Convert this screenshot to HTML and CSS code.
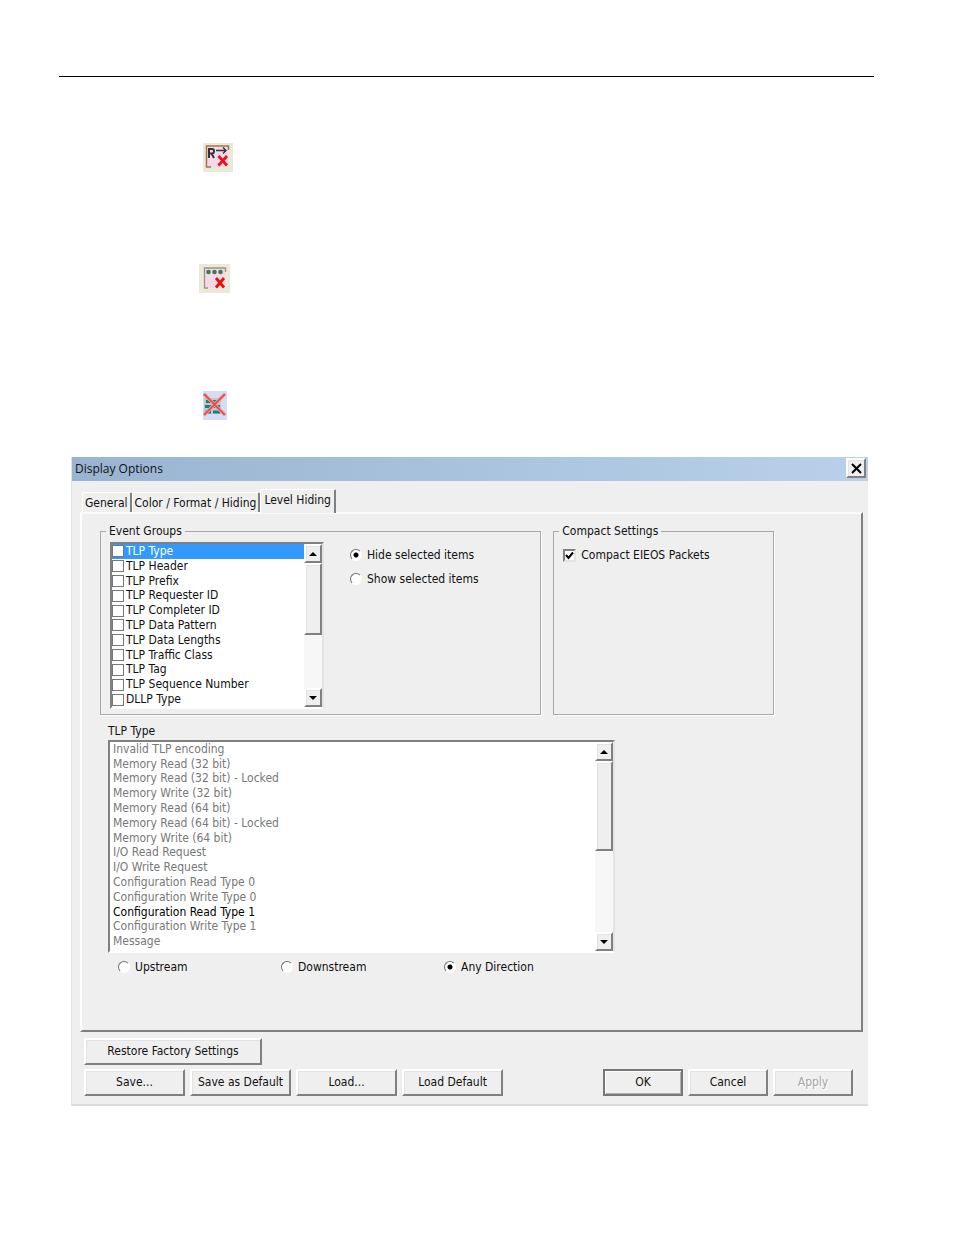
FILE: index.html
```
<!DOCTYPE html>
<html lang="en">
<head>
    <meta charset="UTF-8">
    <meta name="viewport" content="width=device-width, initial-scale=1.0">
    <title>Display Options</title>
    <link rel="stylesheet" href="styles.css">
</head>
<body>

    <hr class="page-rule">

    <!-- Toolbar icons -->
    <div class="icons">
        <svg class="icon" width="30" height="29" viewBox="0 0 30 29">
            <rect width="30" height="29" fill="#ece9d8"/>
            <rect x="3" y="4" width="22" height="20" fill="#f5d9ea"/>
            <path d="M8 24H3.500V3H25.500V7" fill="none" stroke="#a9714b" stroke-width="1.500"/>
            <path d="M6 15V6H9Q11 6 11 8Q11 10.500 9 10.500H6M8.500 10.500L11 15" fill="none" stroke="#333" stroke-width="2"/>
            <path d="M13 7.500H23M20 4.500L23 7.500L20 10.500" fill="none" stroke="#333" stroke-width="1.400"/>
            <path d="M15.500 13L24 22.500M24 13L15.500 22.500" stroke="#e8141c" stroke-width="2.800"/>
        </svg>
        <svg class="icon icon-dots" width="31" height="29" viewBox="0 0 31 29">
            <rect width="31" height="29" fill="#ece9d8"/>
            <rect x="6" y="5" width="20" height="19" fill="#f3d9e6"/>
            <path d="M9 24H5.500V4H26.500V8" fill="none" stroke="#98938b" stroke-width="1.300"/>
            <g fill="#3c7a58">
                <circle cx="9.500" cy="8" r="2.300"/>
                <circle cx="15.500" cy="8" r="2.300"/>
                <circle cx="21.500" cy="8" r="2.300"/>
            </g>
            <path d="M17 14L25 23.500M25 14L17 23.500" stroke="#e8100c" stroke-width="2.800"/>
        </svg>
        <svg class="icon icon-rows" width="24" height="29" viewBox="0 0 24 29">
            <rect width="24" height="29" fill="#d5dcf3"/>
            <rect x="1" y="7" width="17" height="16" fill="#c4c8c6"/>
            <path d="M3 10.500H16M2 15.500H8M10 15.500H17M2 21H8M10 21H17" stroke="#0d8585" stroke-width="3"/>
            <path d="M1 3L22 24M22 3L1 24" stroke="#f59a9a" stroke-width="3.500"/>
            <path d="M1 3L22 24M22 3L1 24" stroke="#e04444" stroke-width="1.600"/>
        </svg>
    </div>

    <div class="dialog">
        <div class="title-bar">
            <span class="title">Display Options</span>
            <button class="close-btn" aria-label="Close">
                <svg width="11" height="11" viewBox="0 0 11 11"><path d="M1 1L10 10M10 1L1 10" stroke="#000" stroke-width="2"/></svg>
            </button>
        </div>

        <div class="tabs" role="tablist">
            <button class="tab" role="tab">General</button>
            <button class="tab" role="tab">Color / Format / Hiding</button>
            <button class="tab active" role="tab" aria-selected="true">Level Hiding</button>
        </div>

        <div class="tab-panel" role="tabpanel">
            <div class="groups">
                <fieldset class="group events">
                    <legend>Event Groups</legend>
                    <div class="list-box">
                        <div class="check-list">
                            <label class="selected"><input type="checkbox">TLP Type</label>
                            <label><input type="checkbox">TLP Header</label>
                            <label><input type="checkbox">TLP Prefix</label>
                            <label><input type="checkbox">TLP Requester ID</label>
                            <label><input type="checkbox">TLP Completer ID</label>
                            <label><input type="checkbox">TLP Data Pattern</label>
                            <label><input type="checkbox">TLP Data Lengths</label>
                            <label><input type="checkbox">TLP Traffic Class</label>
                            <label><input type="checkbox">TLP Tag</label>
                            <label><input type="checkbox">TLP Sequence Number</label>
                            <label><input type="checkbox">DLLP Type</label>
                        </div>
                        <div class="scrollbar">
                            <button class="arrow" aria-label="Scroll up"><svg width="8" height="4" viewBox="0 0 8 4"><path d="M0 4L4 0L8 4Z"/></svg></button>
                            <div class="track"><div class="thumb thumb-events"></div></div>
                            <button class="arrow" aria-label="Scroll down"><svg width="8" height="4" viewBox="0 0 8 4"><path d="M0 0L4 4L8 0Z"/></svg></button>
                        </div>
                    </div>
                    <div class="radios">
                        <label><input type="radio" name="mode" checked>Hide selected items</label>
                        <label><input type="radio" name="mode">Show selected items</label>
                    </div>
                </fieldset>

                <fieldset class="group compact">
                    <legend>Compact Settings</legend>
                    <label class="compact-check"><input type="checkbox" checked>Compact EIEOS Packets</label>
                </fieldset>
            </div>

            <div class="type-section">
                <div class="type-label" id="type-label">TLP Type</div>
                <div class="list-box">
                    <ul class="type-list" role="listbox" aria-labelledby="type-label">
                        <li role="option">Invalid TLP encoding</li>
                        <li role="option">Memory Read (32 bit)</li>
                        <li role="option">Memory Read (32 bit) - Locked</li>
                        <li role="option">Memory Write (32 bit)</li>
                        <li role="option">Memory Read (64 bit)</li>
                        <li role="option">Memory Read (64 bit) - Locked</li>
                        <li role="option">Memory Write (64 bit)</li>
                        <li role="option">I/O Read Request</li>
                        <li role="option">I/O Write Request</li>
                        <li role="option">Configuration Read Type 0</li>
                        <li role="option">Configuration Write Type 0</li>
                        <li role="option" class="present">Configuration Read Type 1</li>
                        <li role="option">Configuration Write Type 1</li>
                        <li role="option">Message</li>
                    </ul>
                    <div class="scrollbar">
                        <button class="arrow" aria-label="Scroll up"><svg width="8" height="4" viewBox="0 0 8 4"><path d="M0 4L4 0L8 4Z"/></svg></button>
                        <div class="track"><div class="thumb thumb-types"></div></div>
                        <button class="arrow" aria-label="Scroll down"><svg width="8" height="4" viewBox="0 0 8 4"><path d="M0 0L4 4L8 0Z"/></svg></button>
                    </div>
                </div>
                <div class="directions">
                    <label><input type="radio" name="direction">Upstream</label>
                    <label><input type="radio" name="direction">Downstream</label>
                    <label><input type="radio" name="direction" checked>Any Direction</label>
                </div>
            </div>
        </div>

        <!-- Bottom buttons -->
        <div class="footer">
            <button class="btn restore">Restore Factory Settings</button>
            <div class="footer-row">
                <div class="btn-set file-btns">
                    <button class="btn">Save...</button>
                    <button class="btn">Save as Default</button>
                    <button class="btn">Load...</button>
                    <button class="btn">Load Default</button>
                </div>
                <div class="btn-set">
                    <button class="btn small default">OK</button>
                    <button class="btn small">Cancel</button>
                    <button class="btn small" disabled>Apply</button>
                </div>
            </div>
        </div>
    </div>

</body>
</html>
```

FILE: styles.css
```
* {
    box-sizing: border-box;
}

body {
    margin: 0;
    padding: 76px 80px 40px 59px;
    background-color: #fff;
    color: #111;
    font-family: "DejaVu Sans Condensed", Tahoma, sans-serif;
    font-size: 12px;
    line-height: 15px;
}

button, input {
    font: inherit;
    color: inherit;
    margin: 0;
}

.page-rule {
    margin: 0;
    border: 0;
    border-top: 1px solid #000;
}

.icons {
    display: flex;
    flex-direction: column;
    align-items: flex-start;
    padding: 66px 0 37px 140px;
}

.icon {
    display: block;
    margin-left: 4px;
}

.icon-dots {
    margin: 92px 0 98px;
}

/* Dialog window */
.dialog {
    margin: 0 6px 0 12px;
    background-color: #efefef;
    border-left: 1px solid #e2e2e2;
    border-bottom: 2px solid #dcdcdc;
}

.title-bar {
    display: flex;
    justify-content: space-between;
    align-items: center;
    height: 24px;
    padding: 0 2px 2px 3px;
    background: linear-gradient(to right, #99b4d1, #b9d1ea);
}

.title {
    font-family: "Open Sans", "Segoe UI", sans-serif;
}

.close-btn {
    display: flex;
    justify-content: center;
    align-items: center;
    width: 20px;
    height: 20px;
    padding: 0;
}

.close-btn, .btn, .arrow, .thumb {
    background-color: #efefef;
    border: 2px solid;
    border-color: #fff #808080 #808080 #fff;
    box-shadow: inset 1px 1px #e3e3e3;
}

/* Tabs */
.tabs {
    display: flex;
    align-items: flex-end;
    padding: 8px 10px 0;
}

.tab {
    height: 20px;
    padding: 2px 2px 0;
    background-color: #efefef;
    border: 1px solid #fff;
    border-right: 2px solid #808080;
    border-bottom: 0;
    border-radius: 2px 2px 0 0;
    white-space: nowrap;
}

.tab.active {
    height: 24px;
    padding: 0 3px 2px;
    margin-bottom: -1px;
    position: relative;
}

.tab-panel {
    margin: 0 5px 0 8px;
    padding: 10px 87px 55px 18px;
    border: 2px solid;
    border-color: #fafafa #808080 #808080 #fff;
}

.groups {
    display: grid;
    grid-template-columns: 2fr 1fr;
    gap: 12px;
}

.group {
    margin: 0;
    min-width: 0;
    border: 1px solid #a8a8a8;
    box-shadow: 1px 1px #fff;
    padding: 3px 9px 5px;
}

.group legend {
    padding: 0 3px;
    margin-left: -4px;
}

.events {
    display: flex;
}

.events .list-box {
    flex: 0 1 214px;
}

.list-box {
    display: flex;
    background-color: #fff;
    border: 2px solid;
    border-color: #808080 #e3e3e3 #fff #808080;
}

.check-list {
    flex: 1;
    display: grid;
    grid-auto-rows: 1fr;
    height: 163px;
}

.check-list label {
    display: flex;
    align-items: center;
    gap: 2px;
    min-height: 0;
    white-space: nowrap;
}

.check-list .selected {
    background-color: #3399ff;
    color: #fff;
}

input[type="checkbox"] {
    appearance: none;
    flex: none;
    width: 12px;
    height: 12px;
    background-color: #fff;
    border: 1px solid #777;
}

.compact input[type="checkbox"] {
    width: 13px;
    height: 13px;
    border: 2px solid;
    border-color: #808080 #e3e3e3 #e3e3e3 #808080;
}

.compact input[type="checkbox"]:checked {
    background: #fff url("data:image/svg+xml,%3Csvg xmlns='http://www.w3.org/2000/svg' viewBox='0 0 9 9'%3E%3Cpath d='M1 4L3.500 7L8 1.500' fill='none' stroke='%23000' stroke-width='2'/%3E%3C/svg%3E") center / 9px 9px no-repeat;
}

input[type="radio"] {
    appearance: none;
    flex: none;
    width: 12px;
    height: 12px;
    margin-top: -2px;
    border: 1px solid;
    border-color: #707070 #fff #fff #707070;
    border-radius: 50%;
    background-color: #fff;
}

input[type="radio"]:checked {
    background-image: radial-gradient(circle, #000 2px, transparent 3px);
}

.radios, .directions {
    white-space: nowrap;
}

.radios label, .directions label, .compact-check {
    display: flex;
    align-items: center;
    gap: 5px;
}

.radios {
    display: flex;
    flex-direction: column;
    gap: 9px;
    padding: 6px 0 0 26px;
}

.compact-check {
    padding-top: 6px;
}

/* Classic scrollbar */
.scrollbar {
    display: flex;
    flex-direction: column;
    width: 18px;
}

.arrow {
    display: flex;
    justify-content: center;
    align-items: center;
    height: 19px;
    padding: 0;
}

.track {
    flex: 1;
    background-color: #f7f7f7;
}

.thumb-events {
    height: 72px;
}

.thumb-types {
    height: 90px;
}

.type-section {
    padding: 9px 159px 0 8px;
}

.type-label {
    padding-bottom: 1px;
}

.type-list {
    flex: 1;
    display: grid;
    grid-auto-rows: 1fr;
    height: 209px;
    margin: 0;
    padding: 0 0 2px 3px;
    list-style: none;
    color: #787878;
}

.type-list li {
    display: flex;
    align-items: center;
    min-height: 0;
}

.type-list .present {
    color: #000;
}

.directions {
    display: flex;
    padding: 7px 0 0 10px;
}

.directions label {
    flex: 0 1 163px;
}

/* Footer */
.footer {
    padding: 6px 15px 8px 12px;
}

.btn {
    height: 27px;
    padding: 0;
    white-space: nowrap;
}

.btn.restore {
    width: 178px;
}

.footer-row {
    display: flex;
    justify-content: space-between;
    margin-top: 4px;
}

.btn-set {
    display: flex;
    gap: 5px;
}

.file-btns .btn {
    width: 101px;
}

.btn.small {
    width: 80px;
}

.btn.default {
    border-color: #777;
    box-shadow: inset 1px 1px #fff, inset -1px -1px #b0b0b0;
}

.btn:disabled {
    color: #a5a5a5;
    text-shadow: 1px 1px #fff;
}
```
